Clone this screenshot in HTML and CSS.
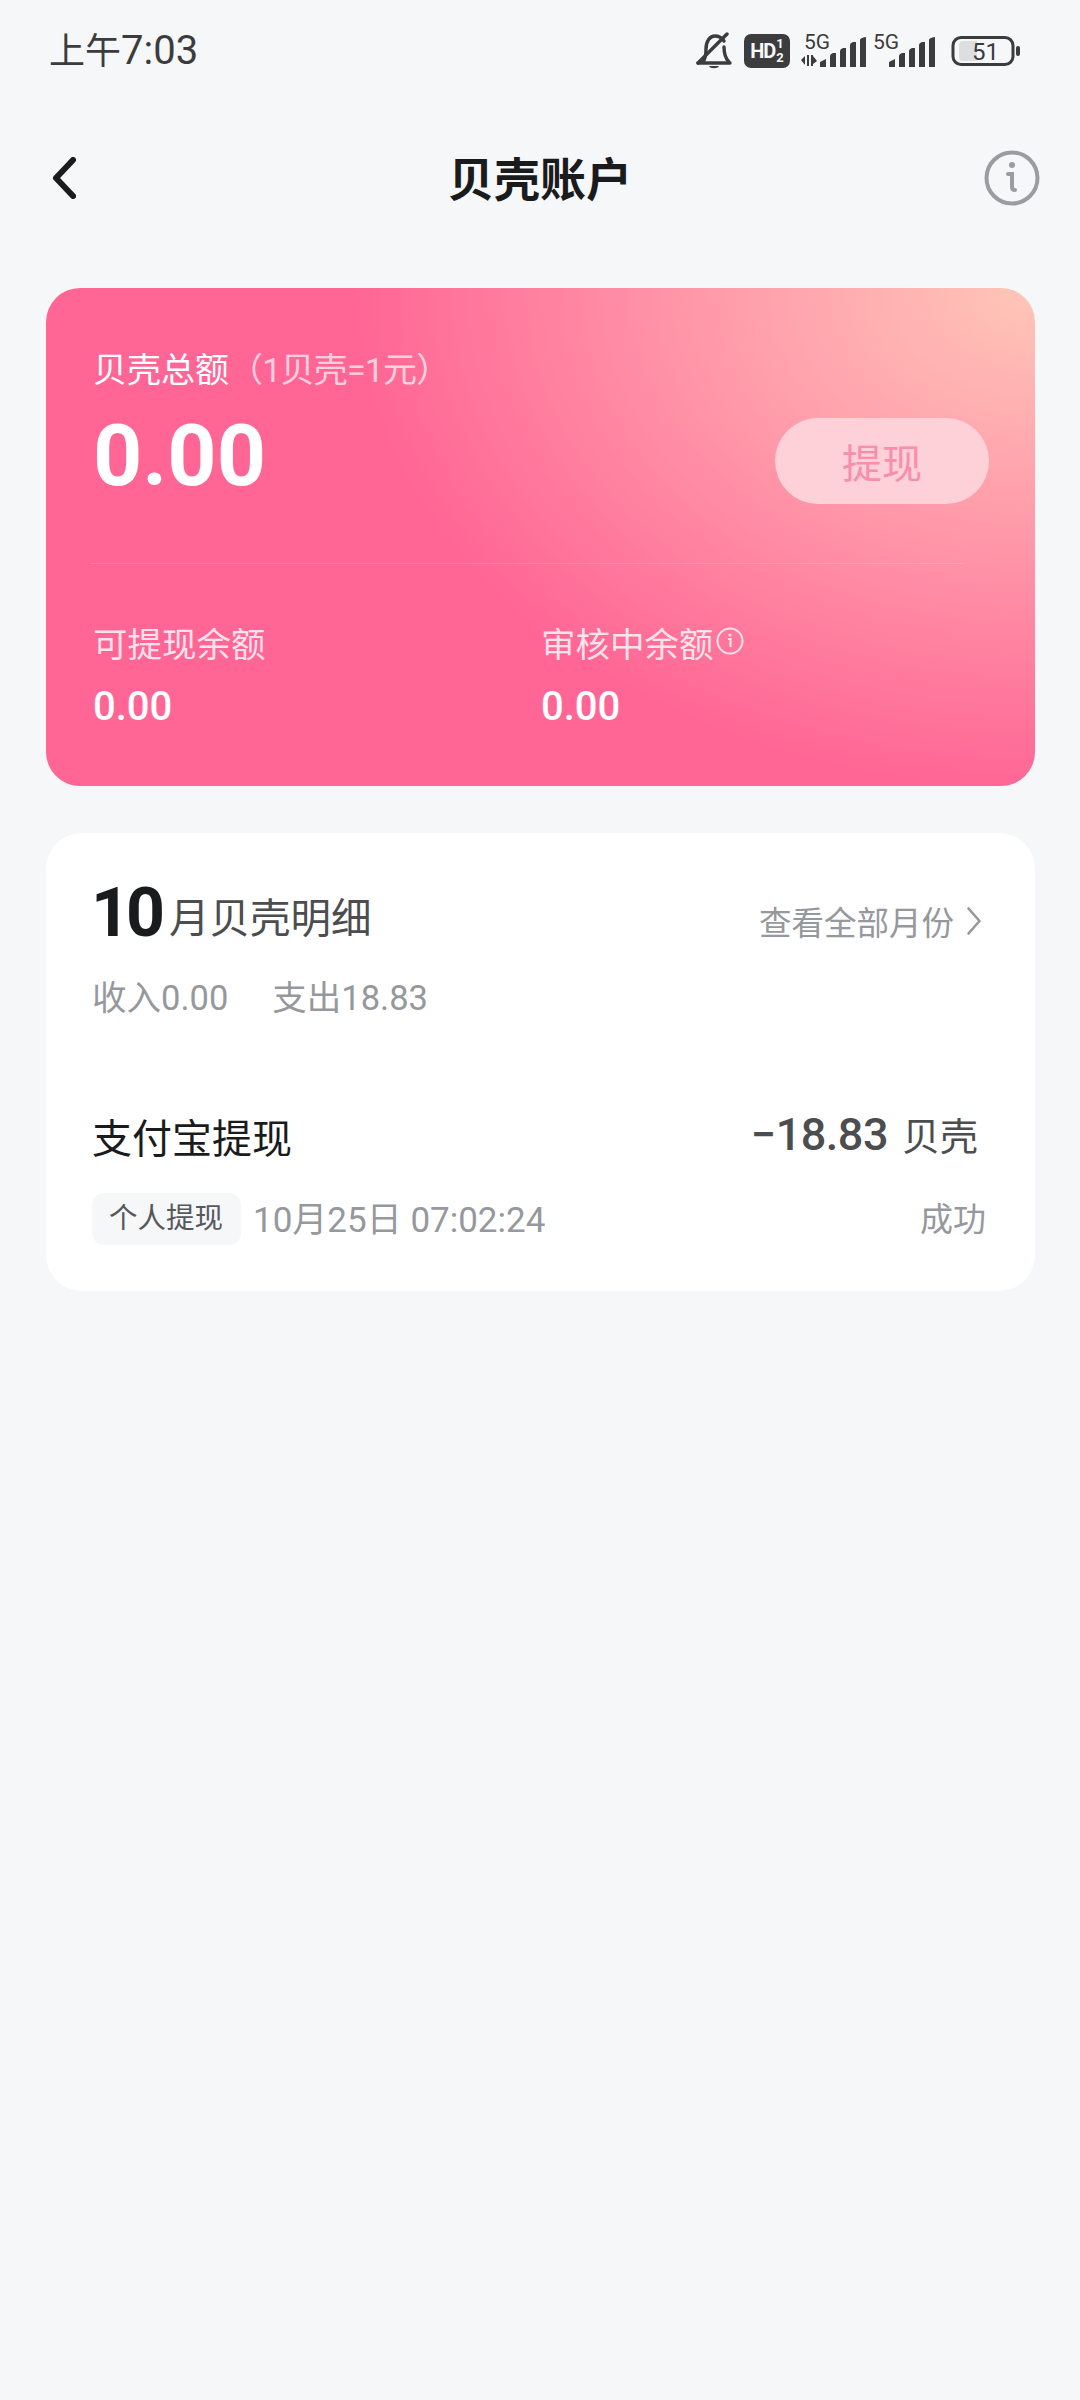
FILE: index.html
```html
<!DOCTYPE html>
<html lang="zh-CN">

<head>
    <meta charset="UTF-8">
    <meta name="viewport" content="width=device-width, initial-scale=1.0">
    <title>贝壳账户</title>
    <link rel="stylesheet" href="styles.css">
</head>

<body>
    <div class="status-bar">
        <span class="status-time">上午<span class="status-digits">7:03</span></span>
        <div class="status-icons">
            <svg class="icon-bell" width="36" height="38" viewBox="0 0 36 38">
                <path d="M7 30 C10 26 10 22 10 17 C10 9 14 4 19 4 C23 4 26 6 28 9 M28 15 C28 22 29 26 33 30 M2 31 H34" fill="none" stroke="#3c3c3e" stroke-width="3.4" stroke-linecap="round"/>
                <path d="M2 31 L31 2" stroke="#3c3c3e" stroke-width="3.4" stroke-linecap="round"/>
                <path d="M13 34 H23 C22 37 14 37 13 34 Z" fill="#3c3c3e"/>
            </svg>
            <div class="hd-badge">
                <span class="hd-text">HD</span>
                <span class="hd-nums"><b>1</b><b>2</b></span>
            </div>
            <svg class="icon-signal" width="68" height="42" viewBox="0 0 68 42">
                <text x="4" y="19" class="sig-text">5G</text>
                <g transform="translate(0 4)">
                    <path d="M1 26 L5 22 V31 Z M7 21 H9 V32 H7 Z M11 21 H13 V32 H11 Z M13 22 L17 27 L13 30 Z" fill="#3c3c3e"/>
                    <path d="M20 33 V28 L26 25 V33 Z M30 33 V22 Q30 20 33 19 H36 V33 Z M40 33 V17 Q40 15 43 14 H46 V33 Z M50 33 V11 Q50 9 53 8 H56 V33 Z M60 33 V6 Q60 4 66 3 V33 Z" fill="#3c3c3e"/>
                </g>
            </svg>
            <svg class="icon-signal icon-signal-two" width="64" height="42" viewBox="0 0 64 42">
                <text x="0" y="19" class="sig-text">5G</text>
                <path transform="translate(0 4)" d="M16 33 V28 L22 25 V33 Z M26 33 V22 Q26 20 29 19 H32 V33 Z M36 33 V17 Q36 15 39 14 H42 V33 Z M46 33 V11 Q46 9 49 8 H52 V33 Z M56 33 V6 Q56 4 62 3 V33 Z" fill="#3c3c3e"/>
            </svg>
            <svg class="icon-battery" width="70" height="30" viewBox="0 0 70 30">
                <rect x="2" y="1.5" width="60" height="27" rx="8" fill="none" stroke="#3c3c3e" stroke-width="3"/>
                <path d="M12 5 H26 V25 H12 Q8 25 8 21 V9 Q8 5 12 5 Z" fill="#dddedf"/>
                <text x="21" y="24" class="bat-text">51</text>
                <rect x="65" y="10" width="4" height="10" rx="2" fill="#3c3c3e"/>
            </svg>
        </div>
    </div>

    <div class="nav-bar">
        <svg class="nav-back" width="24" height="42" viewBox="0 0 24 42">
            <path d="M21 3 L4 21 L21 39" fill="none" stroke="#1a1b1d" stroke-width="6" stroke-linecap="round" stroke-linejoin="round"/>
        </svg>
        <h1 class="nav-title">贝壳账户</h1>
        <svg class="nav-info" width="56" height="56" viewBox="0 0 56 56">
            <circle cx="28" cy="28" r="25.5" fill="none" stroke="#9a9c9f" stroke-width="4"/>
            <circle cx="28" cy="15" r="3" fill="#9a9c9f"/>
            <path d="M24 24 H28 V37 Q28 40 31 40" fill="none" stroke="#9a9c9f" stroke-width="4" stroke-linecap="round"/>
        </svg>
    </div>

    <div class="hero-card">
        <div class="hero-label">贝壳总额<span class="hero-note">（1贝壳=1元）</span></div>
        <div class="hero-row">
            <div class="hero-amount">0.00</div>
            <button class="withdraw-btn" type="button">提现</button>
        </div>
        <div class="hero-line"></div>
        <div class="hero-stats">
            <div>
                <div class="stat-label">可提现余额</div>
                <div class="stat-value">0.00</div>
            </div>
            <div>
                <div class="stat-label">审核中余额<svg class="stat-info" width="28" height="28" viewBox="0 0 28 28">
                        <circle cx="14" cy="14" r="12.5" fill="none" stroke="#ffe3ea" stroke-width="2"/>
                        <circle cx="14" cy="8" r="1.6" fill="#ffe3ea"/>
                        <path d="M12 12 H14.5 V20" fill="none" stroke="#ffe3ea" stroke-width="2"/>
                    </svg></div>
                <div class="stat-value">0.00</div>
            </div>
        </div>
    </div>

    <div class="detail-card">
        <div class="detail-head">
            <div class="detail-title"><span class="detail-month">10</span><span class="detail-name">月贝壳明细</span></div>
            <div class="detail-all">查看全部月份<svg width="14" height="28" viewBox="0 0 14 28">
                    <path d="M1.5 1.5 L12.5 14 L1.5 26.5" fill="none" stroke="#95989c" stroke-width="2.6" stroke-linecap="round" stroke-linejoin="round"/>
                </svg></div>
        </div>
        <div class="detail-sum">
            <span>收入0.00</span>
            <span>支出18.83</span>
        </div>
        <div class="item-top">
            <span class="item-name">支付宝提现</span>
            <span class="item-amount"><span class="item-num">−18.83</span><span class="item-unit">贝壳</span></span>
        </div>
        <div class="item-meta">
            <div class="item-left">
                <span class="item-tag">个人提现</span>
                <span class="item-time">10月25日 07:02:24</span>
            </div>
            <span class="item-state">成功</span>
        </div>
    </div>
</body>

</html>
```

FILE: styles.css
```css
* {
    margin: 0;
    padding: 0;
    box-sizing: border-box;
}

body {
    width: 1080px;
    min-height: 2400px;
    padding: 0 45px 0 46px;
    background-color: #f6f7f9;
    font-family: Roboto, "Noto Sans CJK SC", sans-serif;
}

.status-bar {
    display: flex;
    align-items: center;
    justify-content: space-between;
    height: 100px;
    margin-right: 14px;
    padding: 2px 0 0 3px;
}

.status-time {
    font-size: 36px;
    line-height: 44px;
    color: #3c3c3e;
}

.status-digits {
    font-size: 40px;
}

.status-icons {
    display: flex;
    align-items: center;
    gap: 8px;
}

.icon-bell {
    margin-right: 4px;
}

.hd-badge {
    display: flex;
    align-items: center;
    justify-content: center;
    gap: 1px;
    width: 46px;
    height: 34px;
    margin-right: 2px;
    border-radius: 7px;
    background-color: #3c3c3e;
    color: #f6f7f9;
}

.hd-text {
    font-size: 20px;
    font-weight: 700;
    letter-spacing: -1px;
}

.hd-nums {
    display: flex;
    flex-direction: column;
    font-size: 13px;
    line-height: 14px;
}

.icon-signal-two {
    margin-left: -3px;
}

.sig-text {
    font-family: Roboto, sans-serif;
    font-size: 21px;
    fill: #3c3c3e;
}

.bat-text {
    font-family: Roboto, sans-serif;
    font-size: 24px;
    fill: #3c3c3e;
}

.icon-battery {
    margin-left: 6px;
}

.nav-bar {
    display: grid;
    grid-template-columns: 1fr auto 1fr;
    align-items: center;
    height: 156px;
    margin: 0 -45px 0 -46px;
    padding: 0 40px;
}

.nav-back {
    margin-left: 12px;
}

.nav-title {
    margin-bottom: 5px;
    font-size: 46px;
    font-weight: 700;
    color: #1a1b1d;
}

.nav-info {
    justify-self: end;
}

.hero-card {
    height: 498px;
    margin-top: 32px;
    padding: 64px 46px 0 47px;
    border-radius: 34px;
    background: radial-gradient(ellipse 680px 500px at 100% 0, #ffc6b8 0%, #ff9dab 45%, #ff6695 100%);
}

.hero-label {
    font-size: 34px;
    line-height: 36px;
    color: #fff;
}

.hero-note {
    letter-spacing: -0.8px;
    color: rgba(255, 255, 255, 0.7);
}

.hero-row {
    display: flex;
    align-items: flex-start;
    justify-content: space-between;
    height: 92px;
    margin-top: 24px;
}

.hero-amount {
    margin-top: 1px;
    font-size: 86px;
    font-weight: 700;
    line-height: 86px;
    color: #fff;
}

.withdraw-btn {
    width: 214px;
    height: 86px;
    margin-top: 6px;
    border: none;
    border-radius: 43px;
    background-color: #fed0d7;
    font-family: inherit;
    font-size: 40px;
    color: #f88eac;
}

.hero-line {
    height: 1px;
    margin: 59px 26px 0 -3px;
    background-color: rgba(255, 255, 255, 0.14);
}

.hero-stats {
    display: grid;
    grid-template-columns: 448px 1fr;
    margin-top: 63px;
}

.stat-label {
    display: flex;
    align-items: flex-start;
    font-size: 34.5px;
    line-height: 36px;
    color: rgba(255, 255, 255, 0.82);
}

.stat-info {
    margin-left: 2px;
}

.stat-value {
    margin-top: 20px;
    font-size: 40px;
    font-weight: 500;
    line-height: 48px;
    color: #fff;
}

.detail-card {
    height: 458px;
    margin-top: 47px;
    padding: 42px 49px 0 45px;
    border-radius: 36px;
    background-color: #fff;
}

.detail-head {
    display: flex;
    align-items: baseline;
    justify-content: space-between;
    height: 70px;
}

.detail-title {
    display: flex;
    align-items: baseline;
}

.detail-month {
    position: relative;
    top: 3px;
    font-size: 68px;
    font-weight: 700;
    line-height: 70px;
    letter-spacing: -4px;
    color: #1a1b1d;
}

.detail-name {
    margin-left: 8px;
    font-size: 40.5px;
    color: #4c4d4f;
}

.detail-all {
    display: flex;
    align-items: center;
    gap: 13px;
    margin-right: 5px;
    font-size: 32.5px;
    color: #95989c;
    transform: translateY(2px);
}

.detail-sum {
    display: flex;
    gap: 44px;
    margin-top: 33px;
    padding-left: 1px;
    font-size: 34.5px;
    line-height: 40px;
    color: #95989c;
}

.item-top {
    display: flex;
    align-items: center;
    justify-content: space-between;
    height: 48px;
    margin-top: 94px;
    padding-left: 1px;
}

.item-name {
    font-size: 40px;
    color: #1a1b1d;
}

.item-amount {
    display: flex;
    align-items: baseline;
    margin-right: 8px;
    margin-top: -6px;
}

.item-num {
    font-size: 45px;
    font-weight: 500;
    letter-spacing: -0.5px;
    color: #4c4d4f;
}

.item-unit {
    margin-left: 14px;
    font-size: 38px;
    color: #4c4d4f;
}

.item-meta {
    display: flex;
    align-items: center;
    justify-content: space-between;
    height: 52px;
    margin-top: 33px;
    padding-left: 1px;
}

.item-left {
    display: flex;
    align-items: center;
    gap: 12px;
}

.item-tag {
    padding: 0 18px 0 17px;
    border-radius: 12px;
    background-color: #f6f7f9;
    font-size: 28.5px;
    line-height: 52px;
    color: #55585c;
}

.item-time,
.item-state {
    margin-top: -5px;
    font-size: 35px;
    color: #95989c;
}

.item-state {
    font-size: 33px;
}
```
